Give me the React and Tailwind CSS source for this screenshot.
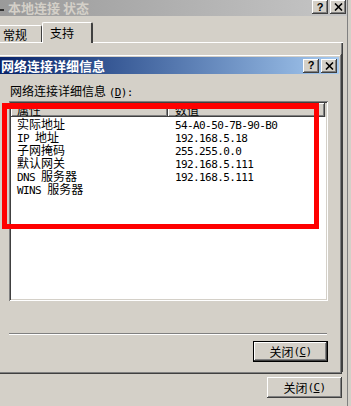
import React from "react";

const raised =
  "shadow-[inset_-1px_-1px_#404040,inset_1px_1px_#ffffff,inset_-2px_-2px_#808080,inset_2px_2px_#d4d0c8]";

function M({ children }) {
  return (
    <span className="font-['DejaVu_Sans_Mono',monospace] text-[11px] tracking-[-0.6px]">
      {children}
    </span>
  );
}

function CaptionButtons() {
  return (
    <div className="flex gap-[2px]">
      <div
        className={`w-[16px] h-[14px] bg-[#d4d0c8] flex items-center justify-center font-['Liberation_Sans',sans-serif] font-bold text-[11px] leading-none text-black ${raised}`}
      >
        ?
      </div>
      <div
        className={`w-[16px] h-[14px] bg-[#d4d0c8] flex items-center justify-center ${raised}`}
      >
        <svg width="9" height="8" viewBox="0 0 9 8">
          <path d="M1 0.5L8 7.5M8 0.5L1 7.5" stroke="#000" strokeWidth="1.6" />
        </svg>
      </div>
    </div>
  );
}

function CloseButton({ isDefault }) {
  return (
    <div
      className={`w-[75px] h-[21px] flex ${isDefault ? "border border-black" : ""}`}
    >
      <div
        className={`flex-1 flex items-center justify-center bg-[#d4d0c8] text-[12px] leading-none ${raised}`}
      >
        关闭
        <M>
          (<u>C</u>)
        </M>
      </div>
    </div>
  );
}

const rows = [
  [<>实际地址</>, "54-A0-50-7B-90-B0"],
  [<><M>IP </M>地址</>, "192.168.5.18"],
  [<>子网掩码</>, "255.255.0.0"],
  [<>默认网关</>, "192.168.5.111"],
  [<><M>DNS </M>服务器</>, "192.168.5.111"],
  [<><M>WINS </M>服务器</>, ""],
];

export default function App() {
  return (
    <div className="relative w-[351px] h-[406px] overflow-hidden bg-[#d4d0c8] font-['Noto_Sans_CJK_SC',sans-serif] text-[12px] text-black">
      {/* outer window */}
      <div className="flex flex-col w-[348px] h-full border-r border-[#808080]">
        <div className="h-[16px] flex items-start justify-between bg-gradient-to-r from-[#9a9a9a] to-[#c6c6c6]">
          <div className="flex items-center h-[16px]">
            <div className="w-[4px] h-[2px] bg-[#303030] mt-[4px]" />
            <span className="ml-[4px] font-bold text-[13px] leading-[16px] text-[#d4d0c8]">
              本地连接 状态
            </span>
          </div>
          <div className="pr-[1px]">
            <CaptionButtons />
          </div>
        </div>
        <div className="mt-[6px] h-[20px] flex items-end">
          <div className="w-[42px] h-[17px] border-t border-white border-r border-r-[#404040] rounded-tr-[2px] pl-[3px] leading-[17px]">
            常规
          </div>
          <div className="relative z-10 -mb-px w-[51px] h-[21px] bg-[#d4d0c8] border-t border-l border-white border-r-2 border-r-[#404040] rounded-t-[2px] pl-[7px] leading-[20px]">
            支持
          </div>
        </div>
        <div className="w-[343px] h-[330px] border-t border-white shadow-[inset_-1px_0_#404040,inset_-2px_0_#808080]" />
        <div className="mt-[5px] flex justify-end pr-[5px]">
          <CloseButton />
        </div>
      </div>

      {/* details dialog */}
      <div className="absolute left-[-3px] top-[54px] w-[345px] h-[320px] p-[3px] bg-[#d4d0c8] flex flex-col shadow-[inset_-1px_-1px_#404040,inset_1px_1px_#d4d0c8,inset_-2px_-2px_#808080,inset_2px_2px_#ffffff]">
        <div className="h-[17px] flex items-center justify-between pr-[2px] bg-gradient-to-r from-[#0a246a] to-[#a6caf0]">
          <span className="pl-[1px] font-bold text-white text-[13px] leading-none">
            网络连接详细信息
          </span>
          <CaptionButtons />
        </div>
        <div className="pl-[9px] flex flex-col">
          <div className="mt-[11px] h-[12px] leading-[12px] pl-[1px]">
            网络连接详细信息{" "}
            <M>
              (<u>D</u>):
            </M>
          </div>
          <div className="mt-[4px] w-[319px] h-[200px] bg-white p-[2px] shadow-[inset_1px_1px_#808080,inset_-1px_-1px_#ffffff,inset_2px_2px_#404040,inset_-2px_-2px_#d4d0c8]">
            <div className="flex h-[14px]">
              <div className={`w-[157px] pl-[6px] bg-[#d4d0c8] leading-[14px] ${raised}`}>
                属性
              </div>
              <div className={`w-[157px] pl-[7px] bg-[#d4d0c8] leading-[14px] ${raised}`}>
                数值
              </div>
              <div className="flex-1 bg-[#d4d0c8]" />
            </div>
            {rows.map(([name, value], i) => (
              <div key={i} className="flex h-[13px] leading-[13px]">
                <div className="w-[157px] pl-[6px] whitespace-nowrap">{name}</div>
                <div className="pl-[7px] whitespace-nowrap">
                  <M>{value}</M>
                </div>
              </div>
            ))}
          </div>
          <div className="mt-[32px] w-[318px] h-[2px] border-t border-[#808080] border-b border-b-white" />
          <div className="mt-[6px] w-[319px] flex justify-end">
            <CloseButton isDefault />
          </div>
        </div>
      </div>

      {/* red annotation box */}
      <div className="absolute left-[2px] top-[103px] w-[317px] h-[126px] border-[5px] border-t-[6px] border-[#ff0000]" />
    </div>
  );
}
